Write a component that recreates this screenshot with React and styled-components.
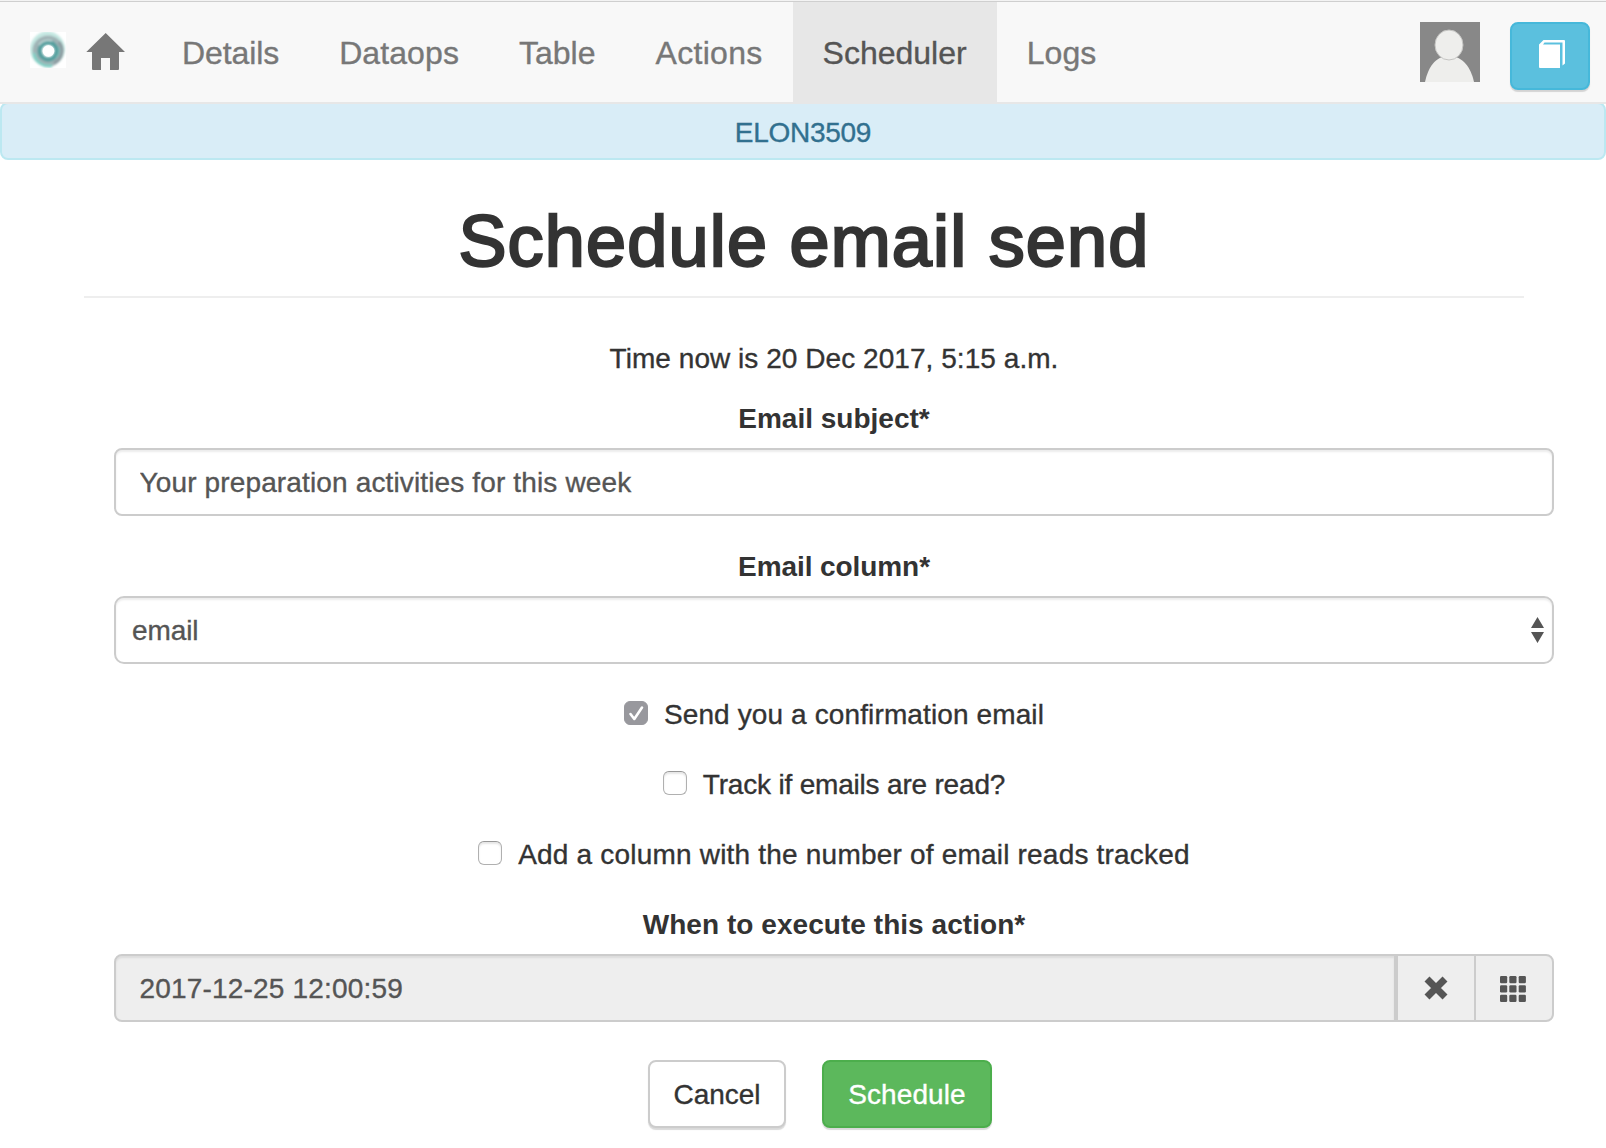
import React from "react";
import styled, { createGlobalStyle, css } from "styled-components";

const Global = createGlobalStyle`
  *, *::before, *::after { box-sizing: border-box; }
  body {
    margin: 0;
    background: #fff;
    color: #333;
    font: 28px/40px "Liberation Sans", Arial, sans-serif;
    -webkit-text-stroke: 0.35px currentColor;
  }
  input, button { font: inherit; letter-spacing: inherit; }
`;

const Page = styled.div`
  height: 1148px;
  overflow: hidden;
  background: #fff;
`;

const Navbar = styled.header`
  position: relative;
  z-index: 1;
  display: flex;
  height: 104px;
  padding-top: 1px;
  background: #f8f8f8;
  border-top: 1px solid #f3f3f3;
  border-bottom: 2px solid #e7e7e7;
  box-shadow: inset 0 1px #cfcfcf;
`;

const Brand = styled.a`
  display: flex;
  align-items: flex-start;
  gap: 20px;
  width: 152px;
  padding: 30px 0 0 30px;
`;

const NavLink = styled.a`
  display: flex;
  align-items: center;
  height: 100px;
  padding: 2px 30px 0;
  font-size: 32px;
  letter-spacing: ${(p) => p.$track}px;
  color: ${(p) => (p.$active ? "#555" : "#777")};
  background: ${(p) => (p.$active ? "#e7e7e7" : "transparent")};
  text-decoration: none;
`;

const NavTools = styled.div`
  display: flex;
  align-items: flex-start;
  gap: 30px;
  margin-left: auto;
  padding: 20px 16px 0 0;
`;

const variants = {
  default: css`color: #333; background: #fff; border-color: #ccc;`,
  success: css`color: #fff; background: #5cb85c; border-color: #4cae4c;`,
  info: css`color: #fff; background: #5bc0de; border-color: #46b8da; padding: 0 0 4px 3px;`,
};

const Button = styled.button`
  display: flex;
  align-items: center;
  justify-content: center;
  width: ${(p) => p.$width}px;
  height: 68px;
  padding: 2px 0 0;
  border: 2px solid;
  border-radius: 8px;
  box-shadow: 0 2px 1px rgba(0, 0, 0, 0.15);
  ${(p) => variants[p.$variant]}
`;

const Banner = styled.div`
  height: 58px;
  margin-top: -2px;
  padding-top: 9px;
  border: 2px solid #bce8f1;
  border-radius: 8px;
  background: #d9edf7;
  color: #31708f;
  text-align: center;
`;

const Main = styled.main`
  width: 1440px;
  margin: 0 auto 0 84px;
`;

const Title = styled.h1`
  height: 138px;
  margin: 0;
  padding-top: 42px;
  border-bottom: 2px solid #eee;
  font-size: 72px;
  line-height: 79px;
  font-weight: 400;
  letter-spacing: 1.2px;
  -webkit-text-stroke: 2.4px #333;
  text-align: center;
`;

const Form = styled.form`
  width: 1440px;
  margin-left: 30px;
  padding-top: 41px;
  text-align: center;
`;

const Now = styled.p`
  margin: 0 0 19px;
`;

const Field = styled.div`
  margin-bottom: 30px;
`;

const Label = styled.label`
  display: block;
  margin-bottom: 9px;
  padding-top: 1px;
  font-weight: 700;
  -webkit-text-stroke-width: 0;
`;

const Text = styled.span`
  letter-spacing: ${(p) => p.$track || 0}px;
`;

const Input = styled.input`
  display: block;
  flex: 1;
  width: 100%;
  min-width: 0;
  height: 68px;
  padding: 2px 24px 0 23.5px;
  border: 2px solid #ccc;
  border-radius: ${(p) => (p.$grouped ? "8px 0 0 8px" : "8px")};
  background: ${(p) => (p.$grouped ? "#eee" : "#fff")};
  color: #555;
  box-shadow: inset 0 2px 2px rgba(0, 0, 0, 0.075);
  letter-spacing: ${(p) => p.$track || 0}px;
  outline: none;
`;

const Select = styled.div`
  display: flex;
  align-items: center;
  justify-content: space-between;
  height: 68px;
  padding: 0 8px 0 16px;
  border: 2px solid #ccc;
  border-radius: 10px;
  color: #555;
  box-shadow: inset 0 2px 2px rgba(0, 0, 0, 0.075);

  ${Text} {
    padding-top: 2px;
  }
`;

const CheckRow = styled.label`
  display: flex;
  align-items: center;
  justify-content: center;
  gap: 16px;
  height: 40px;
  margin-bottom: 30px;

  ${Text} {
    padding-top: 2px;
  }
`;

const CheckBox = styled.span`
  display: flex;
  width: 24px;
  height: 24px;
  margin-top: -3px;
  border: 1px solid ${(p) => (p.$on ? "#98989d" : "#b0b0b0")};
  border-top-color: ${(p) => (p.$on ? "#98989d" : "#989898")};
  border-radius: 6px;
  background: ${(p) => (p.$on ? "#98989d" : "#fff")};
  box-shadow: ${(p) => (p.$on ? "none" : "inset 0 2px 2px rgba(0, 0, 0, 0.1)")};
`;

const InputGroup = styled.div`
  display: flex;
`;

const Addon = styled.span`
  display: flex;
  align-items: center;
  justify-content: center;
  width: ${(p) => (p.$last ? 80 : 78)}px;
  height: 68px;
  padding: ${(p) => (p.$last ? "2px 2px 0 0" : 0)};
  border: 2px solid #ccc;
  border-right-width: ${(p) => (p.$last ? 2 : 0)}px;
  border-radius: ${(p) => (p.$last ? "0 8px 8px 0" : 0)};
  background: #eee;
`;

const Actions = styled.div`
  display: flex;
  gap: 36px;
  margin: 38px 0 0 534px;
`;

const Logo = () => (
  <svg width="36" height="36" viewBox="0 0 36 36">
    <defs>
      <filter id="soft" x="-20%" y="-20%" width="140%" height="140%">
        <feGaussianBlur stdDeviation="0.8" />
      </filter>
    </defs>
    <rect width="36" height="36" fill="#fff" />
    <g fill="none" filter="url(#soft)">
      <circle cx="17.5" cy="17" r="15.5" stroke="#c4e8e2" strokeWidth="4" />
      <circle cx="18" cy="19" r="12.5" stroke="#9fb3b5" strokeWidth="6" />
      <path d="M4 21A14.5 14.5 0 0 0 22 33.5" stroke="#83cfc5" strokeWidth="3" />
      <circle cx="18.2" cy="19" r="8.5" stroke="#559f9e" strokeWidth="4.4" />
      <path d="M29 10A13.5 13.5 0 0 1 24 31" stroke="#8a989e" strokeWidth="2.8" />
      <path d="M9 13A11 11 0 0 1 22 9" stroke="#c5dcda" strokeWidth="1.4" />
      <path d="M28.5 15A11 11 0 0 1 26 26" stroke="#79b9b4" strokeWidth="1.6" />
    </g>
    <circle cx="18.5" cy="19" r="5.8" fill="#fff" />
  </svg>
);

const Home = () => (
  <svg width="40" height="38" viewBox="0 0 40 38">
    <path d="M19.7 1 39 20H33V37Q33 38 32 38H24V26H15V38H7Q6 38 6 37V20H.3Z" fill="#777" />
  </svg>
);

const Avatar = () => (
  <svg width="60" height="60" viewBox="0 0 60 60">
    <rect width="60" height="60" fill="#888" />
    <path d="M5 60C8 46 15 34 29 34S51 46 54 60Z" fill="#eeeeec" />
    <ellipse cx="29" cy="23" rx="14" ry="15" fill="#eeeeec" stroke="#c4c4c2" strokeWidth="1" />
  </svg>
);

const Book = () => (
  <svg width="26" height="28" viewBox="0 0 26 28" fill="#fff">
    <path d="M0 4.5 4.5 0H25Q26 0 26 1V23.5L23.5 25.5V2.5H5.5L4 4.5H21V28H1Q0 28 0 27Z" />
  </svg>
);

const Arrows = () => (
  <svg width="13" height="26" viewBox="0 0 13 26" fill="#555">
    <path d="M6.5 0 13 11H0ZM0 15H13L6.5 26Z" />
  </svg>
);

const Check = () => (
  <svg width="22" height="22" viewBox="0 0 22 22">
    <path d="M5.5 12 9.3 17 17 5.5" fill="none" stroke="#fff" strokeWidth="2.6" strokeLinecap="round" strokeLinejoin="round" />
  </svg>
);

const Cross = () => (
  <svg width="24" height="24" viewBox="0 0 24 24">
    <path d="M3 3 21 21M21 3 3 21" stroke="#555" strokeWidth="7" />
  </svg>
);

const Grid = () => (
  <svg width="26" height="26" viewBox="0 0 26 26" fill="#555">
    {[0, 9.3, 18.7].flatMap((y) =>
      [0, 9.3, 18.7].map((x) => <rect key={`${x}-${y}`} x={x} y={y} width="7.2" height="7.2" rx="1.2" />)
    )}
  </svg>
);

const links = [
  { name: "Details", track: -0.1 },
  { name: "Dataops", track: 0.1 },
  { name: "Table", track: 0 },
  { name: "Actions", track: 0.3 },
  { name: "Scheduler", track: 0, active: true },
  { name: "Logs", track: 0.1 },
];

const checks = [
  { text: "Send you a confirmation email", on: true, track: 0.12 },
  { text: "Track if emails are read?", on: false, track: -0.19 },
  { text: "Add a column with the number of email reads tracked", on: false, track: 0.2 },
];

export default function App() {
  return (
    <Page>
      <Global />
      <Navbar>
        <Brand>
          <Logo />
          <Home />
        </Brand>
        {links.map((l) => (
          <NavLink key={l.name} $active={l.active} $track={l.track}>{l.name}</NavLink>
        ))}
        <NavTools>
          <Avatar />
          <Button $variant="info" $width={80}><Book /></Button>
        </NavTools>
      </Navbar>
      <Banner><Text $track={-0.28}>ELON3509</Text></Banner>
      <Main>
        <Title>Schedule email send</Title>
        <Form>
          <Now><Text $track={0.05}>Time now is 20 Dec 2017, 5:15 a.m.</Text></Now>
          <Field>
            <Label><Text>Email subject*</Text></Label>
            <Input readOnly $track={0.14} value="Your preparation activities for this week" />
          </Field>
          <Field>
            <Label><Text $track={-0.08}>Email column*</Text></Label>
            <Select><Text $track={-0.1}>email</Text><Arrows /></Select>
          </Field>
          {checks.map((c) => (
            <CheckRow key={c.text}>
              <CheckBox $on={c.on}>{c.on && <Check />}</CheckBox>
              <Text $track={c.track}>{c.text}</Text>
            </CheckRow>
          ))}
          <Label><Text $track={0.05}>When to execute this action*</Text></Label>
          <InputGroup>
            <Input $grouped readOnly $track={0.19} value="2017-12-25 12:00:59" />
            <Addon><Cross /></Addon>
            <Addon $last><Grid /></Addon>
          </InputGroup>
          <Actions>
            <Button type="button" $variant="default" $width={138}><Text>Cancel</Text></Button>
            <Button type="button" $variant="success" $width={170}><Text $track={0.1}>Schedule</Text></Button>
          </Actions>
        </Form>
      </Main>
    </Page>
  );
}
